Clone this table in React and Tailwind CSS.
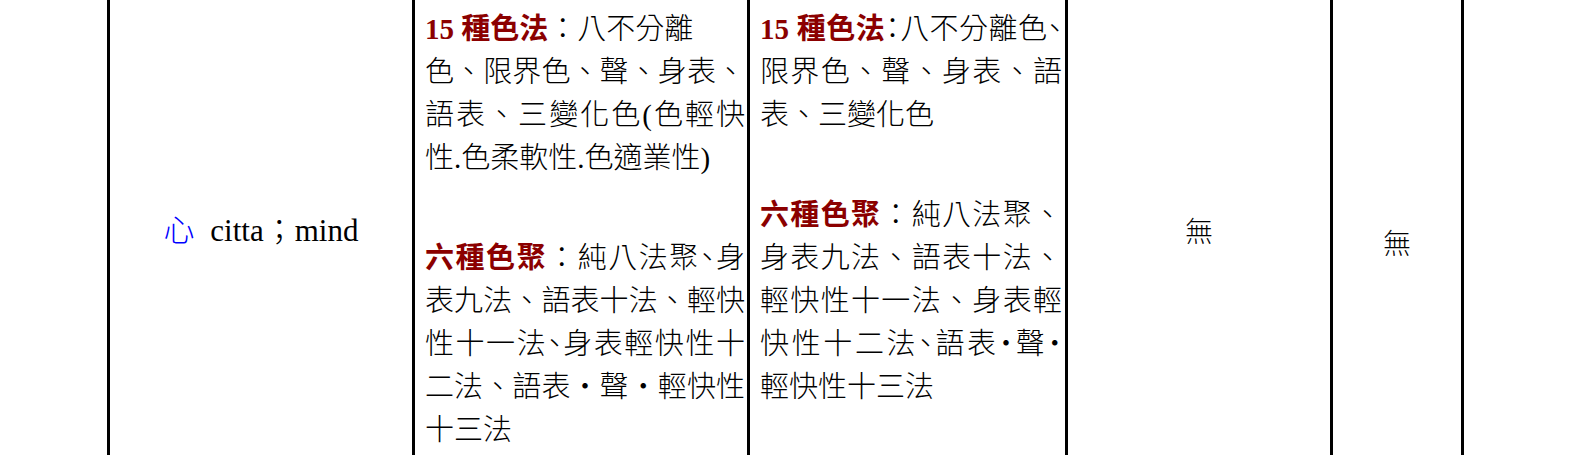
import React from "react";

const red = "font-bold text-[#8b0000]";
const J = "whitespace-nowrap text-justify [text-align-last:justify]";
const L = "whitespace-nowrap";
const half = "[font-feature-settings:'halt']";

const App = () => {
  return (
    <div className="flex h-[455px] w-[1571px] overflow-hidden bg-white text-black font-light font-['Liberation_Serif','Noto_Sans_CJK_TC',serif] text-[29px] leading-[43px]">
      <div className="w-[107px] shrink-0" />

      <div className="flex w-[305px] shrink-0 items-center justify-center border-l-[3px] border-black pt-[6px] font-normal">
        <span className="whitespace-nowrap text-[31px]">
          <span className="mr-[8px] font-light text-[#0000ff]">心</span> citta<span className="font-light">；</span>mind
        </span>
      </div>

      <div className="w-[335px] shrink-0 border-l-[3px] border-black pl-[10px] pr-[2px] pt-[8px]">
        <div className={L}>
          <span className={red}>15 種色法</span>：八不分離
        </div>
        <div className={J}>色、限界色、聲、身表、</div>
        <div className={J}>語表、三變化色(色輕快</div>
        <div className={L}>性.色柔軟性.色適業性)</div>
        <div className="mt-[57px]">
          <div className={J}>
            <span className={red}>六種色聚</span>：純八法聚<span className={half}>、</span>身
          </div>
          <div className={J}>表九法、語表十法、輕快</div>
          <div className={J}>性十一法<span className={half}>、</span>身表輕快性十</div>
          <div className={J}>二法、語表・聲・輕快性</div>
          <div className={L}>十三法</div>
        </div>
      </div>

      <div className="w-[318px] shrink-0 border-l-[3px] border-black pl-[10px] pr-[3px] pt-[8px]">
        <div className={J}>
          <span className={red}>15 種色法</span>
          <span className={half}>：</span>八不分離色<span className={half}>、</span>
        </div>
        <div className={J}>限界色、聲、身表、語</div>
        <div className={L}>表、三變化色</div>
        <div className="mt-[57px]">
          <div className={J}>
            <span className={red}>六種色聚</span>：純八法聚、
          </div>
          <div className={J}>身表九法、語表十法、</div>
          <div className={J}>輕快性十一法、身表輕</div>
          <div className={J}>
            快性十二法<span className={half}>、</span>語表<span className={half}>・</span>聲<span className={half}>・</span>
          </div>
          <div className={L}>輕快性十三法</div>
        </div>
      </div>

      <div className="flex w-[265px] shrink-0 items-center justify-center border-l-[3px] border-black pt-[10px] text-[28px]">
        無
      </div>

      <div className="flex w-[131px] shrink-0 items-center justify-center border-l-[3px] border-black pt-[34px] text-[28px]">
        無
      </div>

      <div className="w-[110px] shrink-0 border-l-[3px] border-black" />
    </div>
  );
};

export default App;
